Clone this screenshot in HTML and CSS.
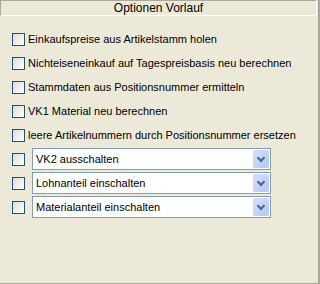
FILE: index.html
```html
<!DOCTYPE html>
<html lang="de">
<head>
    <meta charset="UTF-8">
    <title>Optionen Vorlauf</title>
    <link rel="stylesheet" href="styles.css">
</head>
<body>
    <div class="panel">
        <div class="panel-header">Optionen Vorlauf</div>

        <div class="options">
            <label class="option"><span class="check"></span>Einkaufspreise aus Artikelstamm holen</label>
            <label class="option"><span class="check"></span>Nichteiseneinkauf auf Tagespreisbasis neu berechnen</label>
            <label class="option"><span class="check"></span>Stammdaten aus Positionsnummer ermitteln</label>
            <label class="option"><span class="check"></span>VK1 Material neu berechnen</label>
            <label class="option"><span class="check"></span>leere Artikelnummern durch Positionsnummer ersetzen</label>

            <div class="option combo-row">
                <span class="check"></span>
                <div class="combo"><span class="combo-text">VK2 ausschalten</span><span class="combo-btn"></span></div>
            </div>
            <div class="option combo-row">
                <span class="check"></span>
                <div class="combo"><span class="combo-text">Lohnanteil einschalten</span><span class="combo-btn"></span></div>
            </div>
            <div class="option combo-row">
                <span class="check"></span>
                <div class="combo"><span class="combo-text">Materialanteil einschalten</span><span class="combo-btn"></span></div>
            </div>
        </div>
    </div>
</body>
</html>
```

FILE: styles.css
```css
body {
    margin: 0;
    padding: 0;
    background-color: #ece9d8;
    font-family: "Liberation Sans", Arial, sans-serif;
    font-size: 11px;
    color: #000;
}

.panel {
    width: 320px;
    height: 284px;
    box-sizing: border-box;
    border-right: 2px solid #aca899;
    border-bottom: 1px solid #aca899;
}

.panel-header {
    height: 14px;
    line-height: 14px;
    text-align: center;
    font-size: 12px;
    border-top: 1px solid #aca899;
    border-left: 1px solid #aca899;
    border-bottom: 1px solid #fff;
    border-right: 1px solid #fff;
    margin-right: 1px;
}

.options {
    display: flex;
    flex-direction: column;
    gap: 10px;
    padding: 16px 0 0 12px;
}

.option {
    display: flex;
    align-items: center;
    gap: 3px;
    height: 14px;
    white-space: nowrap;
}

.check {
    flex: none;
    width: 11px;
    height: 11px;
    border: 1px solid #1c5180;
    background: linear-gradient(135deg, #dcdcd7, #ffffff);
}

.combo-row {
    gap: 7px;
}

.combo {
    width: 237px;
    height: 20px;
    display: flex;
    align-items: center;
    justify-content: space-between;
    border: 1px solid #7f9db9;
    background: #fff;
}

.combo-text {
    padding-left: 3px;
}

.combo-btn {
    width: 16px;
    height: 18px;
    margin-right: 1px;
    border-radius: 2px;
    background: linear-gradient(135deg, #d4e0fd, #b4c8f6);
    position: relative;
}

.combo-btn::after {
    content: "";
    position: absolute;
    left: 5px;
    top: 5px;
    width: 4px;
    height: 4px;
    border-right: 2px solid #4d6185;
    border-bottom: 2px solid #4d6185;
    transform: rotate(45deg);
}
```
